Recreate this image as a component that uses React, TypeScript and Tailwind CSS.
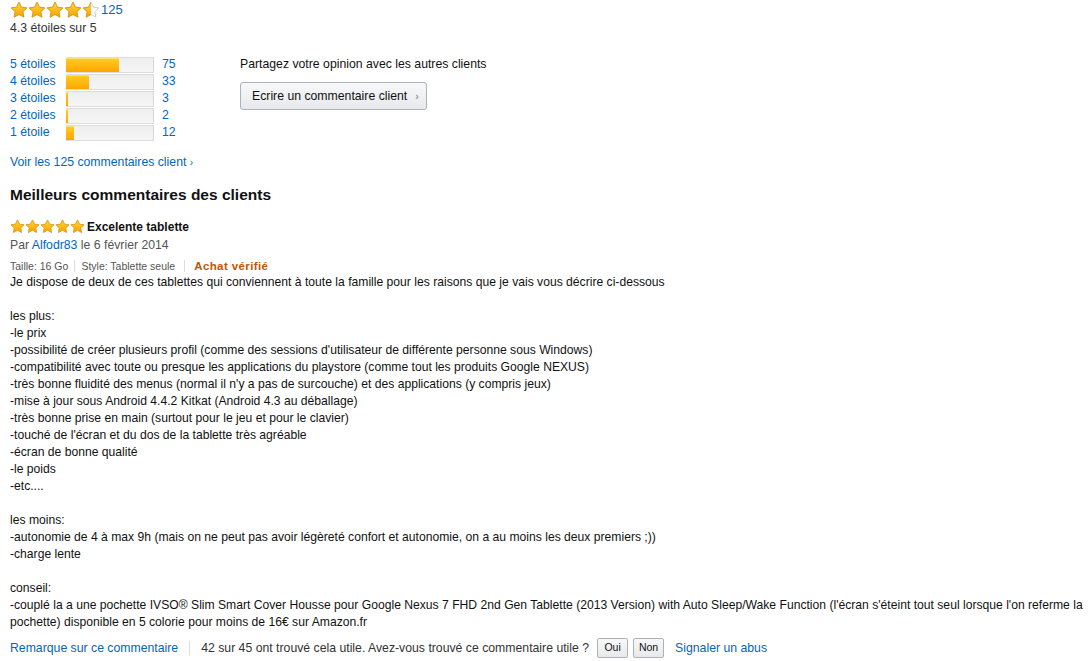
import React from "react";

const font = { fontFamily: '"Liberation Sans", Arial, sans-serif' };

const Star = ({ size = 17, fill = 1, id }: { size?: number; fill?: number; id: string }) => (
  <svg width={size} height={size} viewBox="0 0 24 24">
    <defs>
      <linearGradient id={`g-${id}`} x1="0" y1="0" x2="0" y2="1">
        <stop offset="0" stopColor="#ffd83a" />
        <stop offset="1" stopColor="#f7a200" />
      </linearGradient>
      <clipPath id={`c-${id}`}>
        <rect x="0" y="0" width={24 * fill} height="24" />
      </clipPath>
    </defs>
    <path
      d="M12 1.5l3.2 6.8 7.3.9-5.4 5 1.4 7.3L12 17.9l-6.5 3.6 1.4-7.3-5.4-5 7.3-.9z"
      fill="#fff"
      stroke="#c9c9c9"
      strokeWidth="1.2"
      strokeLinejoin="round"
    />
    <path
      d="M12 1.5l3.2 6.8 7.3.9-5.4 5 1.4 7.3L12 17.9l-6.5 3.6 1.4-7.3-5.4-5 7.3-.9z"
      fill={`url(#g-${id})`}
      stroke="#e09a00"
      strokeWidth="1.2"
      strokeLinejoin="round"
      clipPath={`url(#c-${id})`}
    />
  </svg>
);

const rows = [
  { label: "5 étoiles", n: 75 },
  { label: "4 étoiles", n: 33 },
  { label: "3 étoiles", n: 3 },
  { label: "2 étoiles", n: 2 },
  { label: "1 étoile", n: 12 },
];

const body = [
  "Je dispose de deux de ces tablettes qui conviennent à toute la famille pour les raisons que je vais vous décrire ci-dessous",
  "",
  "les plus:",
  "-le prix",
  "-possibilité de créer plusieurs profil (comme des sessions d'utilisateur de différente personne sous Windows)",
  "-compatibilité avec toute ou presque les applications du playstore (comme tout les produits Google NEXUS)",
  "-très bonne fluidité des menus (normal il n'y a pas de surcouche) et des applications (y compris jeux)",
  "-mise à jour sous Android 4.4.2 Kitkat (Android 4.3 au déballage)",
  "-très bonne prise en main (surtout pour le jeu et pour le clavier)",
  "-touché de l'écran et du dos de la tablette très agréable",
  "-écran de bonne qualité",
  "-le poids",
  "-etc....",
  "",
  "les moins:",
  "-autonomie de 4 à max 9h (mais on ne peut pas avoir légèreté confort et autonomie, on a au moins les deux premiers ;))",
  "-charge lente",
  "",
  "conseil:",
  "-couplé la a une pochette IVSO® Slim Smart Cover Housse pour Google Nexus 7 FHD 2nd Gen Tablette (2013 Version) with Auto Sleep/Wake Function (l'écran s'éteint tout seul lorsque l'on referme la pochette) disponible en 5 colorie pour moins de 16€ sur Amazon.fr",
];

const btn = "border border-[#adb1b8] bg-gradient-to-b from-[#f7f8fa] to-[#e7e9ec] text-[#111]";

export default function App() {
  return (
    <div style={font} className="w-[1088px] h-[661px] overflow-hidden bg-white pl-[10px] text-[12.25px] text-[#111]">
      <div className="flex items-center h-[18px] mt-[1px]">
        <div className="flex">
          {[1, 1, 1, 1, 0.5].map((f, i) => (
            <Star key={i} id={`t${i}`} fill={f} size={18} />
          ))}
        </div>
        <a className="ml-[1px] text-[#0066c0] text-[13px] leading-[15px] -mt-[2px]">125</a>
      </div>
      <div className="leading-[17px] mt-[1px] text-[#333]">4.3 étoiles sur 5</div>

      <div className="flex mt-[19px]">
        <div className="w-[230px]">
          {rows.map((r) => (
            <div key={r.label} className="flex items-center h-[17px]">
              <a className="w-[56px] text-[#0066c0]">{r.label}</a>
              <div className="w-[88px] h-[16px] bg-gradient-to-b from-[#eeeeee] to-[#f6f6f6] border-t border-b border-[#dcdcdc] shadow-[inset_-1px_0_0_#d6d6d6,inset_1px_0_0_#e6e6e6]">
                <div
                  className="h-full bg-gradient-to-b from-[#ffce1f] to-[#ffa500] shadow-[inset_0_1px_0_#ffe070]"
                  style={{ width: `${(r.n / 125) * 100}%`, minWidth: 2 }}
                />
              </div>
              <a className="ml-[8px] text-[#0066c0]">{r.n}</a>
            </div>
          ))}
        </div>
        <div>
          <div className="leading-[17px]">Partagez votre opinion avec les autres clients</div>
          <button className={`mt-[9px] h-[28px] w-[187px] flex items-center pl-[11px] rounded-[3px] whitespace-nowrap text-[12.25px] ${btn}`}>
            Ecrire un commentaire client
            <span className="ml-[8px] text-[#999] text-[11px] font-bold">›</span>
          </button>
        </div>
      </div>

      <a className="block mt-[13px] leading-[17px] text-[#0066c0]">
        Voir les 125 commentaires client <span className="text-[10px]">›</span>
      </a>

      <h2 className="mt-[14px] text-[15.5px] font-bold leading-[20px] text-[#111]">
        Meilleurs commentaires des clients
      </h2>

      <div className="mt-[13px] flex items-center h-[17px]">
        <div className="flex">
          {[0, 1, 2, 3, 4].map((i) => (
            <Star key={i} id={`r${i}`} size={15} />
          ))}
        </div>
        <span className="ml-[2px] font-bold text-[12px]">Excelente tablette</span>
      </div>
      <div className="leading-[17px] mt-[2px] text-[#555]">
        Par <a className="text-[#0066c0]">Alfodr83</a> le 6 février 2014
      </div>
      <div className="flex items-center text-[10.5px] text-[#555] mt-[5px] leading-[14px]">
        <span>Taille: 16 Go</span>
        <span className="mx-[6px] h-[12px] w-px bg-[#ddd]" />
        <span>Style: Tablette seule</span>
        <span className="mx-[9px] h-[12px] w-px bg-[#ddd]" />
        <span className="text-[#c45500] font-bold text-[11.5px] tracking-[0.4px]">Achat vérifié</span>
      </div>

      <div className="leading-[17px] mt-[1px] text-[12.15px]">
        {body.map((l, i) => (
          <div key={i} className="min-h-[17px]">{l}</div>
        ))}
      </div>

      <div className="flex items-center mt-[6px] h-[22px]">
        <a className="text-[#0066c0]">Remarque sur ce commentaire</a>
        <span className="mx-[11px] h-[14px] w-px bg-[#ddd]" />
        <span className="text-[#333]">42 sur 45 ont trouvé cela utile. Avez-vous trouvé ce commentaire utile ?</span>
        <button className={`ml-[8px] h-[20px] w-[31px] text-[10.5px] rounded-[2px] ${btn}`}>
          Oui
        </button>
        <button className={`ml-[5px] h-[20px] w-[31px] text-[10.5px] rounded-[2px] ${btn}`}>
          Non
        </button>
        <a className="ml-[11px] text-[#0066c0]">Signaler un abus</a>
      </div>
    </div>
  );
}
